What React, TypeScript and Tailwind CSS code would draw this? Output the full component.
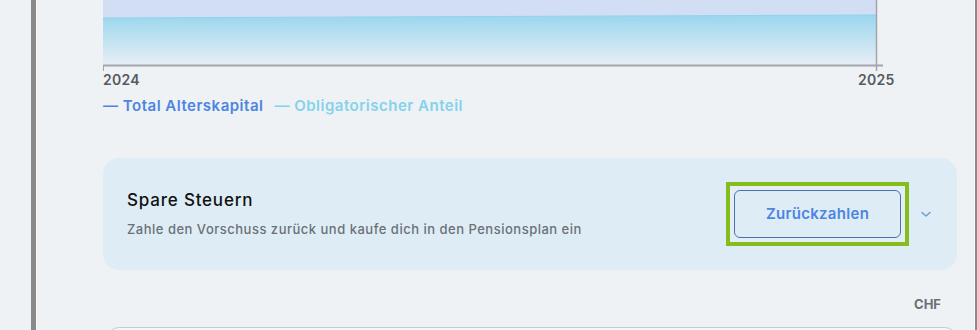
import React from "react";

export default function App() {
  return (
    <div
      className="flex h-[330px] w-[977px] overflow-hidden bg-[#eef2f5]"
      style={{ fontFamily: "Inter, 'Noto Sans', sans-serif" }}
    >
      <div className="w-[31px] shrink-0 bg-[#eef2f5]" />
      <div className="w-[5px] shrink-0 bg-[#8a8a8a]" />
      <div className="w-px shrink-0 bg-[#f6f8fa]" />
      <div className="flex min-w-0 flex-1 flex-col pl-[66px] pr-[16px]">
        {/* chart */}
        <div className="relative h-[72px] w-[790px] shrink-0">
          <svg width="790" height="72" viewBox="0 0 790 72" className="block">
            <defs>
              <linearGradient id="lower" x1="0" y1="0" x2="0" y2="1">
                <stop offset="0" stopColor="#9ad6ee" />
                <stop offset="1" stopColor="#e7eef5" />
              </linearGradient>
            </defs>
            <polygon points="0,0 773,0 773,15 0,18" fill="#d2def4" />
            <polygon points="0,18 773,15 773,65 0,65" fill="url(#lower)" />
            <line x1="0" y1="18" x2="773" y2="15" stroke="#8fd3ec" strokeWidth="1" />
            <line x1="0" y1="65.5" x2="780" y2="65.5" stroke="#a2a6ac" strokeWidth="2" />
            <line x1="773.5" y1="0" x2="773.5" y2="71" stroke="#a2a6ac" strokeWidth="1.5" />
            <line x1="0.5" y1="65" x2="0.5" y2="71" stroke="#a2a6ac" strokeWidth="1" />
          </svg>
        </div>
        <div className="relative h-[16px] w-[795px] shrink-0 text-[14px] font-semibold leading-[16px] tracking-[0.3px] text-[#555a60]">
          <span className="absolute left-0 top-0">2024</span>
          <span className="absolute left-[755px] top-0">2025</span>
        </div>
        <div className="mt-[8px] flex shrink-0 items-center gap-[11px] text-[15px] font-semibold leading-[20px] tracking-[0.5px]">
          <span className="text-[#4d84e2]">— Total Alterskapital</span>
          <span className="text-[#84d2ec]">— Obligatorischer Anteil</span>
        </div>

        {/* card */}
        <div className="mt-[42px] flex h-[112px] w-[854px] shrink-0 items-center rounded-[16px] bg-[#deedf5] pl-[24px] pr-[25px]">
          <div className="flex flex-1 flex-col gap-[10px] pb-[2px]">
            <div className="text-[17px] font-medium leading-[22px] tracking-[0.8px] text-[#111]">Spare Steuern</div>
            <div className="text-[13px] font-medium leading-[17px] tracking-[0.5px] text-[#6b7077]">
              Zahle den Vorschuss zurück und kaufe dich in den Pensionsplan ein
            </div>
          </div>
          <div className="border-[4px] border-[#84bd1c] bg-[#e3eef5] p-[4px]">
            <button className="flex h-[48px] w-[167px] items-center justify-center rounded-[6px] border border-[#4a6fb5] bg-[#deedf5] text-[15px] font-semibold tracking-[0.3px] text-[#4d84e2]">
              Zurückzahlen
            </button>
          </div>
          <svg width="12" height="12" viewBox="0 0 12 12" className="ml-[11px]">
            <path d="M2 4.5 L6 8 L10 4.5" fill="none" stroke="#6f9ad8" strokeWidth="1.5" strokeLinecap="round" strokeLinejoin="round" />
          </svg>
        </div>

        <div className="mt-[27px] flex w-[854px] shrink-0 justify-end pr-[16px] text-[13px] font-bold leading-[14px] text-[#6b6f75]">
          CHF
        </div>
        <div className="ml-[4px] mt-[16px] h-[40px] w-[850px] shrink-0 rounded-t-[12px] border border-[#c6cbd1] bg-[#f4f6f8]" />
      </div>
      <div className="w-px shrink-0 bg-[#f8fafb]" />
      <div className="w-[2px] shrink-0 bg-[#8a8a8a]" />
    </div>
  );
}
